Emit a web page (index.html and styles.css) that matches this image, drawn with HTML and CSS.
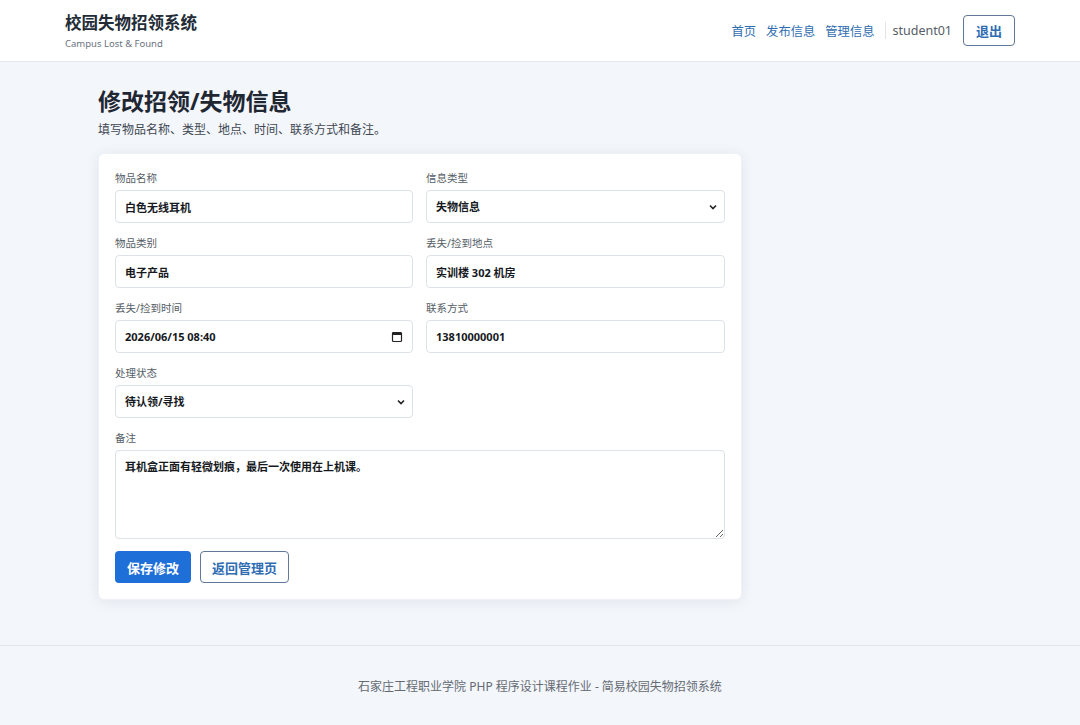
FILE: index.html
```html
<!DOCTYPE html>
<html lang="zh-CN">
<head>
  <meta charset="UTF-8" />
  <meta name="viewport" content="width=device-width, initial-scale=1.0"/>
  <title>修改招领/失物信息 - 校园失物招领系统</title>
  <link rel="stylesheet" href="styles.css">
</head>
<body>

  <header class="topbar">
    <div class="topbar-inner">
      <div class="brand">
        <div class="brand-title">校园失物招领系统</div>
        <div class="brand-sub">Campus Lost &amp; Found</div>
      </div>
      <nav class="nav">
        <a href="#">首页</a>
        <a href="#">发布信息</a>
        <a href="#">管理信息</a>
        <span class="nav-user">student01</span>
        <a href="#" class="btn-outline btn-logout">退出</a>
      </nav>
    </div>
  </header>

  <main class="page">
    <h1 class="page-title">修改招领/失物信息</h1>
    <p class="page-desc">填写物品名称、类型、地点、时间、联系方式和备注。</p>

    <form class="card">
      <div class="form-grid">
        <div class="field">
          <label>物品名称</label>
          <input name="title" value="白色无线耳机" />
        </div>
        <div class="field">
          <label>信息类型</label>
          <select name="type">
            <option>失物信息</option>
            <option>招领信息</option>
          </select>
        </div>
        <div class="field">
          <label>物品类别</label>
          <input name="category" value="电子产品" />
        </div>
        <div class="field">
          <label>丢失/捡到地点</label>
          <input name="place" value="实训楼 302 机房" />
        </div>
        <div class="field">
          <label>丢失/捡到时间</label>
          <div class="date-wrap">
            <input name="time" value="2026/06/15 08:40" />
            <svg class="date-icon" width="12" height="12" viewBox="0 0 12 12">
              <rect x="1.5" y="1.5" width="9" height="9" rx="1" fill="none" stroke="#222" stroke-width="1.2"/>
              <rect x="1.5" y="1.5" width="9" height="2.5" fill="#222"/>
            </svg>
          </div>
        </div>
        <div class="field">
          <label>联系方式</label>
          <input name="contact" value="13810000001" />
        </div>
        <div class="field">
          <label>处理状态</label>
          <select name="status">
            <option>待认领/寻找</option>
            <option>已完成</option>
          </select>
        </div>
        <div class="field"></div>
        <div class="field field-wide">
          <label>备注</label>
          <textarea name="remark">耳机盒正面有轻微划痕，最后一次使用在上机课。</textarea>
        </div>
      </div>
      <div class="actions">
        <button type="submit" class="btn-primary">保存修改</button>
        <a href="#" class="btn-outline">返回管理页</a>
      </div>
    </form>
  </main>

  <footer class="footer">
    石家庄工程职业学院 PHP 程序设计课程作业 - 简易校园失物招领系统
  </footer>

</body>
</html>
```

FILE: styles.css
```css
* {
  box-sizing: border-box;
}
body {
  margin: 0;
  font-family: "Noto Sans", "Noto Sans CJK SC", sans-serif;
  background: #f3f6fb;
  color: #1f2937;
}
a {
  text-decoration: none;
}

/* top bar */
.topbar {
  background: white;
  border-bottom: 1px solid #e3e8ef;
}
.topbar-inner {
  width: 950px;
  height: 61px;
  margin: 0 auto;
  display: flex;
  align-items: center;
  justify-content: space-between;
}
.brand-title {
  font-size: 16.5px;
  font-weight: 700;
  color: #222b36;
  line-height: 22px;
  margin-top: 1px;
}
.brand-sub {
  font-size: 9.5px;
  color: #6b7280;
  margin-top: 3px;
}
.nav {
  display: flex;
  align-items: center;
  font-size: 12.3px;
}
.nav a {
  color: #2f6db3;
  margin-right: 10px;
}
.nav a:nth-child(3) {
  margin-right: 0;
}
.nav-user {
  color: #555d66;
  border-left: 1px solid #e1e5ea;
  margin-left: 11px;
  padding-left: 6px;
  margin-right: 11px;
  font-size: 12.5px;
}
.btn-outline {
  display: inline-flex;
  align-items: center;
  justify-content: center;
  height: 32px;
  padding: 0 13px;
  border: 1px solid #60789a;
  border-radius: 4px;
  background: white;
  color: #2f6db3;
  font-size: 13px;
  font-weight: 700;
}
.nav .btn-logout {
  height: 31px;
  width: 52px;
  padding: 0;
  margin: 0;
}

/* main area */
.page {
  width: 884px;
  margin: 0 auto;
  padding: 24px 0 45px;
}
.page-title {
  margin: 0;
  font-size: 23px;
  line-height: 30px;
  font-weight: 700;
  color: #1f2733;
}
.page-desc {
  margin: 4px 0 0;
  font-size: 12px;
  color: #3f4752;
}
.card {
  width: 644px;
  margin-top: 15px;
  background: white;
  border-radius: 6px;
  padding: 17px 16px 16px 16px;
  box-shadow: 0 2px 14px rgba(30, 45, 70, 0.08);
  border: 1px solid #eef1f5;
}
.form-grid {
  display: grid;
  grid-template-columns: 298px 299px;
  column-gap: 13px;
  row-gap: 13px;
}
.field label {
  display: block;
  font-size: 10.5px;
  line-height: 14px;
  color: #555d66;
  margin-bottom: 5px;
}
.field-wide {
  grid-column: 1 / 3;
}
.field:empty {
  display: none;
}
input, select, textarea {
  display: block;
  width: 100%;
  height: 33px;
  padding: 0 9px;
  border: 1px solid #dde2e8;
  border-radius: 4px;
  background: white;
  font-family: "Noto Sans", "Noto Sans CJK SC", sans-serif;
  font-size: 11px;
  font-weight: 700;
  color: #16191d;
}
select {
  appearance: none;
  -webkit-appearance: none;
  background-image: url("data:image/svg+xml,%3Csvg xmlns='http://www.w3.org/2000/svg' width='8' height='6' viewBox='0 0 8 6'%3E%3Cpath d='M1 1.5l3 3 3-3' fill='none' stroke='%23222' stroke-width='1.6'/%3E%3C/svg%3E");
  background-repeat: no-repeat;
  background-position: right 7px center;
}
.date-wrap {
  position: relative;
}
.date-icon {
  position: absolute;
  right: 10px;
  top: 11px;
}
textarea {
  height: 89px;
  padding: 8px 9px;
  resize: vertical;
  line-height: 16px;
}
.actions {
  display: flex;
  gap: 9px;
  margin-top: 12px;
}
.btn-primary {
  height: 32px;
  width: 76px;
  border: none;
  border-radius: 4px;
  background: #1f6fd9;
  color: white;
  font-family: "Noto Sans", "Noto Sans CJK SC", sans-serif;
  font-size: 13px;
  font-weight: 700;
  cursor: pointer;
}
.actions .btn-outline {
  width: 89px;
  padding: 0;
}

/* footer */
.footer {
  border-top: 1px solid #e1e6ee;
  text-align: center;
  font-size: 12px;
  color: #656b73;
  padding: 31px 0 40px;
}
```
